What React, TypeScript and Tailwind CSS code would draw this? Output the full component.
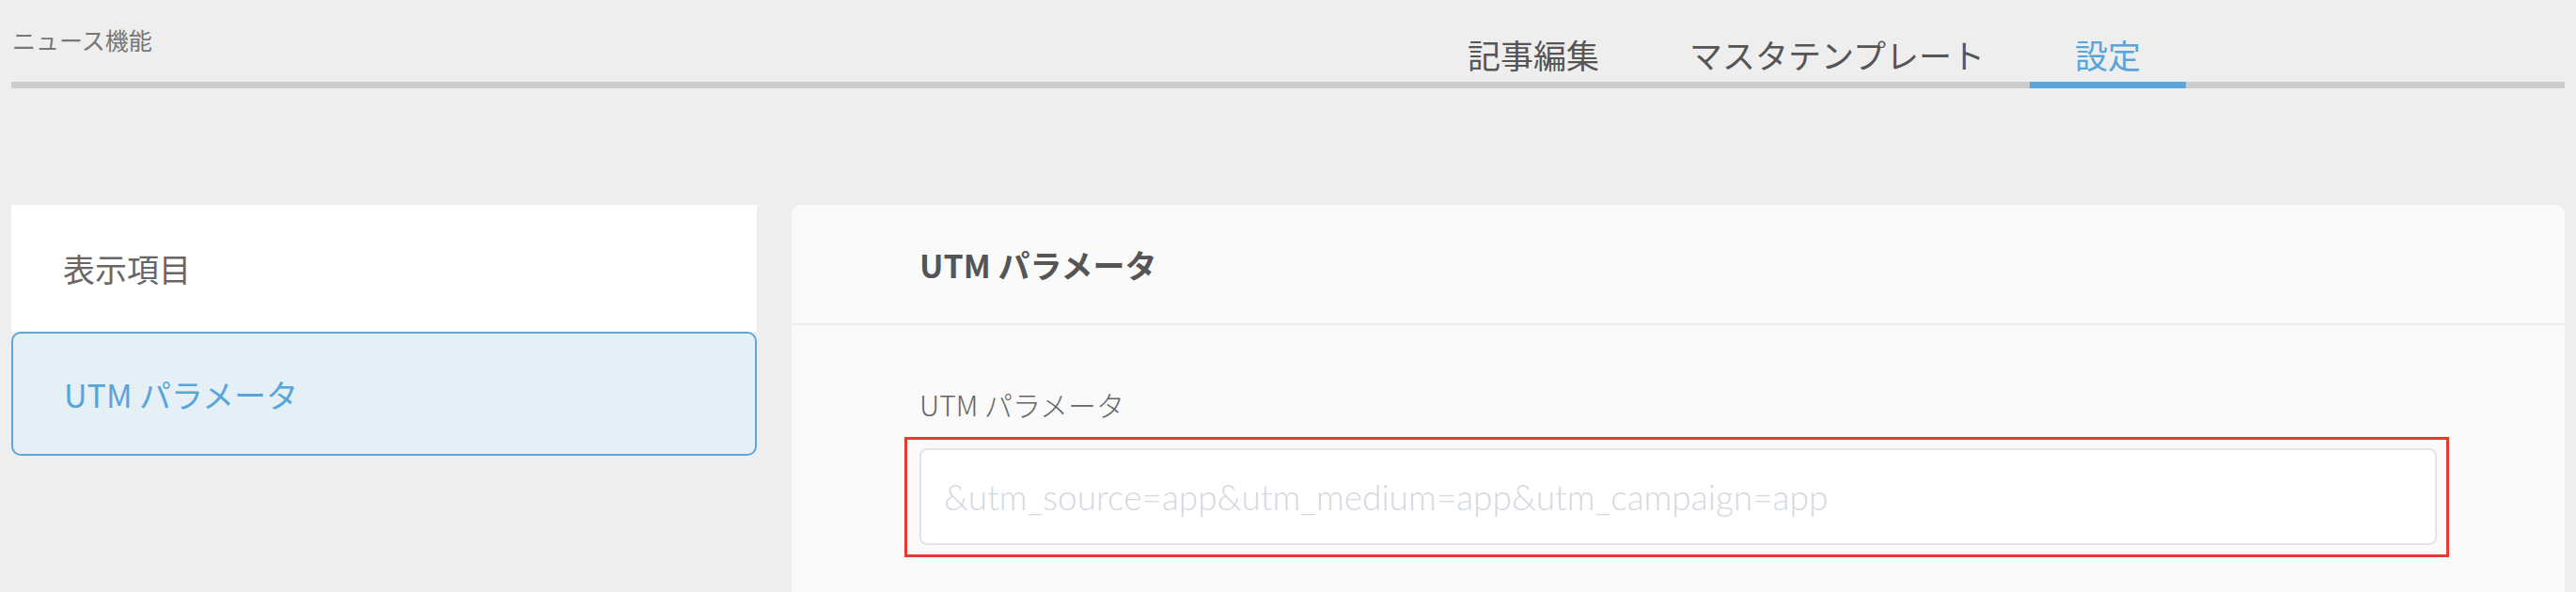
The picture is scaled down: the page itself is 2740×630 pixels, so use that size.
import React from "react";

const tabs = [
  { label: "記事編集", active: false },
  { label: "マスタテンプレート", active: false },
  { label: "設定", active: true },
];

const menu = [
  { label: "表示項目", active: false },
  { label: "UTM パラメータ", active: true },
];

export default function App() {
  return (
    <div className="min-h-[630px] bg-[#eeeeee] font-['Noto_Sans_CJK_JP',sans-serif] text-[#666666]">
      {/* header */}
      <div className="mx-[12px] flex h-[94px] border-b-[7px] border-[#cccccc]">
        <h1 className="pl-[1px] pt-[25px] text-[25px] leading-[1.4] text-[#777777]">ニュース機能</h1>
        <nav className="-mb-[7px] ml-auto mr-[403px] flex">
          {tabs.map((tab) => (
            <div
              key={tab.label}
              className={
                tab.active
                  ? "flex items-end border-b-[7px] border-[#58a5da] px-[48px] pb-[5px] text-[35px] leading-[1.4] text-[#58a5da]"
                  : "flex items-end border-b-[7px] border-transparent px-[48px] pb-[5px] text-[35px] leading-[1.4] text-[#555555]"
              }
            >
              {tab.label}
            </div>
          ))}
        </nav>
      </div>

      {/* body */}
      <div className="flex gap-[37px] px-[12px] pt-[124px]">
        <div className="flex w-[793px] shrink-0 flex-col self-start">
          {menu.map((item) =>
            item.active ? (
              <div
                key={item.label}
                className="flex h-[132px] items-center rounded-[10px] border-2 border-[#5ea6da] bg-[#e4eff6] pl-[54px] text-[34px] text-[#58a5da]"
              >
                {item.label}
              </div>
            ) : (
              <div
                key={item.label}
                className="flex h-[135px] items-center bg-white pl-[55px] text-[34px] text-[#666666]"
              >
                {item.label}
              </div>
            )
          )}
        </div>

        <div className="flex-1 rounded-[10px] bg-[#fafafa]">
          <div className="flex h-[128px] items-center border-b-2 border-[#ececec] px-[136px] text-[34px] font-bold text-[#555555]">
            UTM パラメータ
          </div>
          <div className="px-[136px] pb-[80px] pt-[62px]">
            <label className="block text-[30px] font-light leading-[1.5] text-[#666666]">UTM パラメータ</label>
            <div className="relative mt-[24px]">
              <input
                type="text"
                placeholder="&utm_source=app&utm_medium=app&utm_campaign=app"
                className="h-[103px] w-full rounded-[8px] border-2 border-[#e2e4ea] bg-white px-[24px] font-['Lato',sans-serif] text-[37px] font-light text-[#555555] outline-none placeholder:text-[#d5d8df]"
              />
              <div className="pointer-events-none absolute -bottom-[13px] -left-[16px] -right-[13px] -top-[12px] border-[3px] border-[#e63a30]" />
            </div>
          </div>
        </div>
      </div>
    </div>
  );
}
